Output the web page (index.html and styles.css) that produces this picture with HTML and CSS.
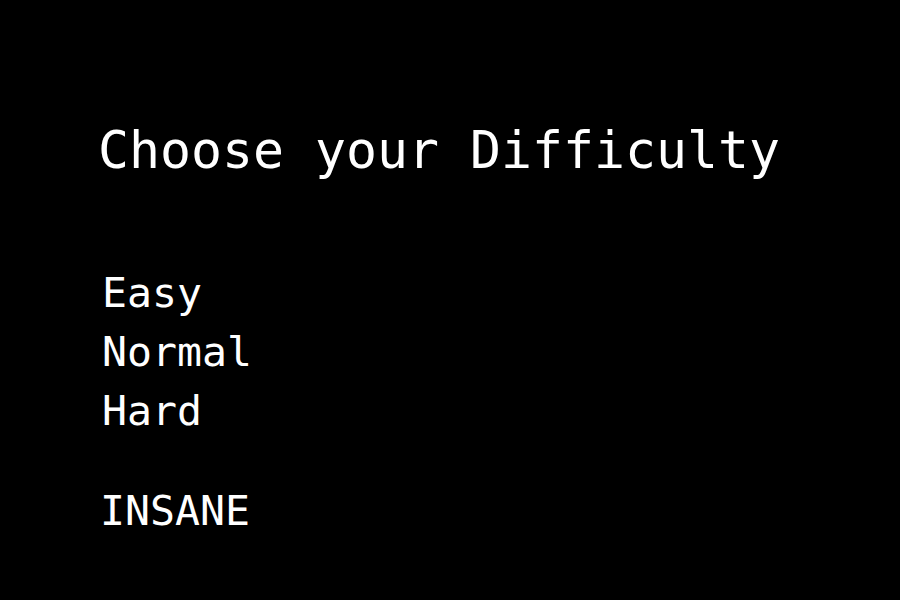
FILE: index.html
```html
<!DOCTYPE html>
<html>
<head>
<meta charset="utf-8">
<link rel="stylesheet" href="styles.css">
</head>
<body>
<main class="screen">
  <h1 class="title">Choose your Difficulty</h1>
  <ul class="menu">
    <li class="item">Easy</li>
    <li class="item">Normal</li>
    <li class="item">Hard</li>
    <li class="item insane">INSANE</li>
  </ul>
</main>
</body>
</html>
```
FILE: styles.css
```css
html, body {
  margin: 0;
  padding: 0;
  background: #000;
  width: 900px;
  height: 600px;
  overflow: hidden;
}
.screen {
  padding: 120px 0 0 98px;
  font-family: "DejaVu Sans Mono", monospace;
  color: #fff;
}
.title {
  margin: 0;
  font-size: 51.5px;
  font-weight: normal;
  line-height: 60px;
}
.menu {
  list-style: none;
  margin: 83px 0 0 4px;
  padding: 0;
}
.item {
  font-size: 41.5px;
  line-height: 59px;
}
.insane {
  margin-top: 41px;
  margin-left: -2px;
}
```
